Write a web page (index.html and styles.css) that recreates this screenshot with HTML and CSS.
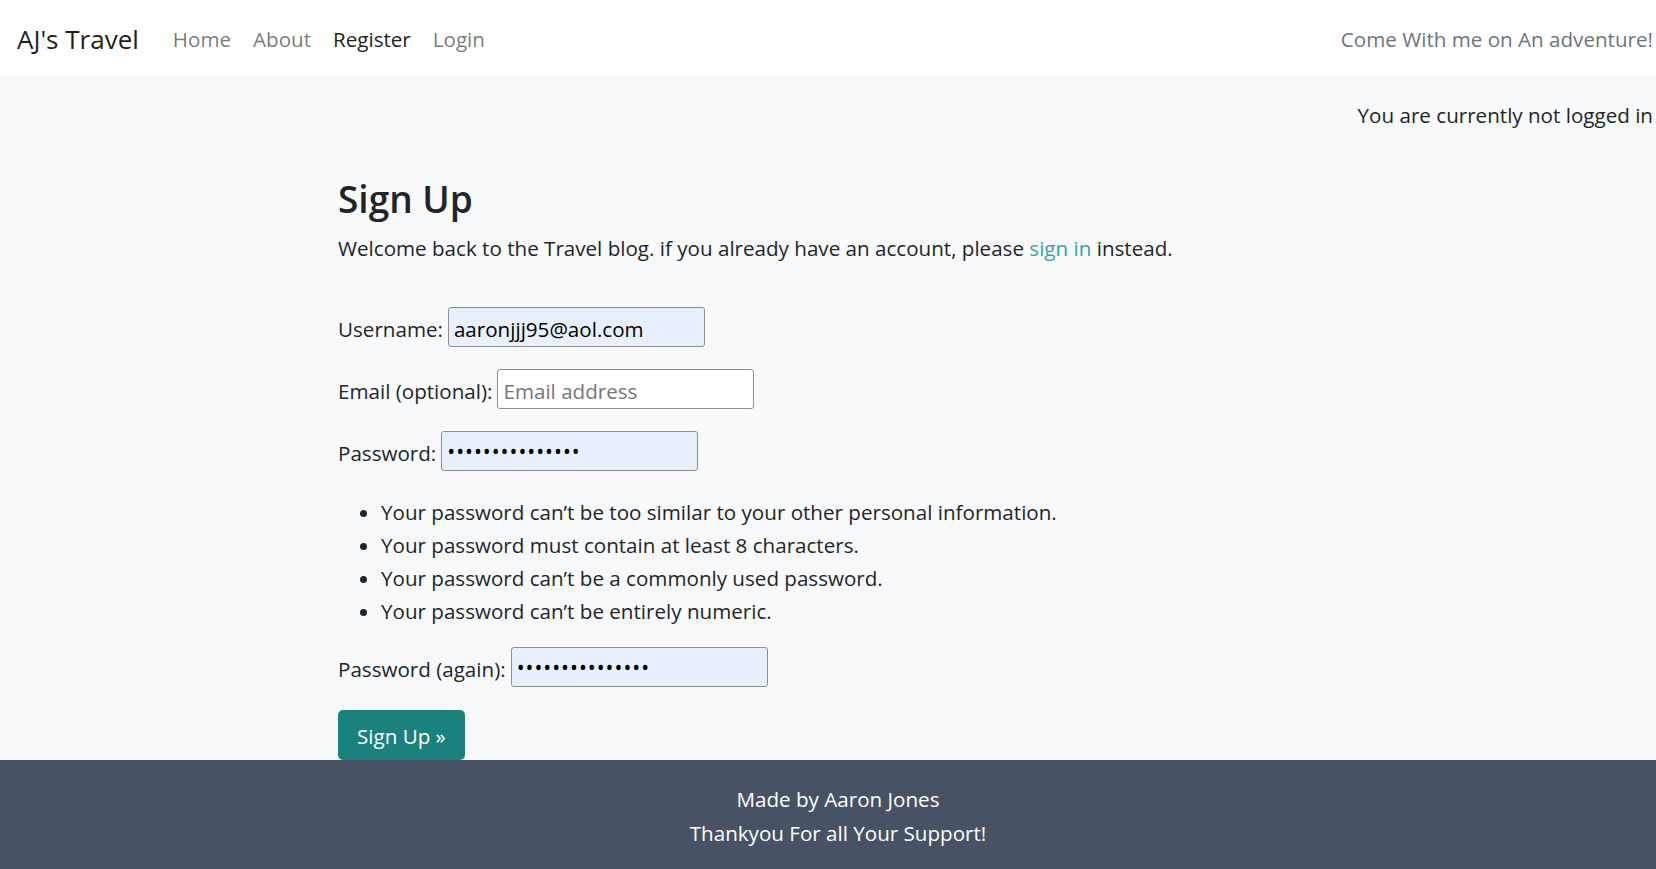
FILE: index.html
```html
<!DOCTYPE html>
<html lang="en">
<head>
<meta charset="utf-8">
<title>AJ's Travel - Sign Up</title>
<link rel="stylesheet" href="styles.css">
</head>
<body>
<nav class="navbar">
  <a class="brand" href="#">AJ's Travel</a>
  <ul class="nav-links">
    <li><a class="nav-link" href="#">Home</a></li>
    <li><a class="nav-link" href="#">About</a></li>
    <li><a class="nav-link active" href="#">Register</a></li>
    <li><a class="nav-link" href="#">Login</a></li>
  </ul>
  <span class="tagline">Come With me on An adventure!</span>
</nav>
<main class="main">
  <div class="status">You are currently not logged in</div>
  <section class="content">
    <h1 class="title">Sign Up</h1>
    <p class="intro">Welcome back to the Travel blog. if you already have an account, please <a class="link" href="#">sign in</a> instead.</p>
    <form class="signup">
      <div class="row">
        <label class="label" for="id_username">Username:</label>
        <input class="field filled" id="id_username" type="text" value="aaronjjj95@aol.com">
      </div>
      <div class="row">
        <label class="label" for="id_email">Email (optional):</label>
        <input class="field" id="id_email" type="email" placeholder="Email address">
      </div>
      <div class="row">
        <label class="label" for="id_password1">Password:</label>
        <input class="field filled" id="id_password1" type="password" value="aaaaaaaaaaaaaaa">
      </div>
      <ul class="help">
        <li>Your password can’t be too similar to your other personal information.</li>
        <li>Your password must contain at least 8 characters.</li>
        <li>Your password can’t be a commonly used password.</li>
        <li>Your password can’t be entirely numeric.</li>
      </ul>
      <div class="row row-last">
        <label class="label" for="id_password2">Password (again):</label>
        <input class="field filled" id="id_password2" type="password" value="aaaaaaaaaaaaaaa">
      </div>
      <button class="btn" type="button">Sign Up »</button>
    </form>
  </section>
</main>
<footer class="footer">
  <p class="footer-line">Made by Aaron Jones</p>
  <p class="footer-line">Thankyou For all Your Support!</p>
</footer>
</body>
</html>
```
FILE: styles.css
```css
* { box-sizing: border-box; }
html, body { margin: 0; padding: 0; }
body {
  font-family: "Open Sans", "Noto Sans", "DejaVu Sans", sans-serif;
  font-size: 20.6px;
  color: #212529;
  background: #f8f9fa;
  height: 869px;
  overflow: hidden;
  display: flex;
  flex-direction: column;
}
.navbar {
  height: 76px;
  background: #ffffff;
  display: flex;
  align-items: center;
  padding: 2px 3px 0 17px;
  flex-shrink: 0;
}
.brand {
  font-size: 26px;
  color: rgba(0,0,0,.9);
  text-decoration: none;
  margin-right: 23px;
  line-height: 1;
}
.nav-links {
  list-style: none;
  margin: 0;
  padding: 0;
  display: flex;
}
.nav-link {
  display: block;
  padding: 0 11px;
  color: rgba(0,0,0,.55);
  text-decoration: none;
}
.nav-link.active { color: rgba(0,0,0,.9); }
.tagline {
  margin-left: auto;
  color: #6c757d;
}
.main {
  flex: 1;
  display: flex;
  flex-direction: column;
}
.status {
  text-align: right;
  padding-right: 3px;
  margin-top: 23px;
  line-height: 32px;
}
.content {
  padding-left: 338px;
}
.title {
  font-size: 37px;
  font-weight: 600;
  line-height: 48px;
  margin: 44px 0 0;
}
.intro {
  margin: 9px 0 0;
  line-height: 32px;
}
.link { color: #35a4a6; text-decoration: none; }
.signup {
  margin-top: 43px;
  display: flex;
  flex-direction: column;
  align-items: flex-start;
}
.row {
  display: flex;
  align-items: center;
  gap: 5px;
  height: 40px;
  margin-bottom: 22px;
}
.row-last { margin-bottom: 0; }
.label { padding-top: 3px; }
.field {
  width: 257px;
  height: 40px;
  border: 1px solid #8f8f8f;
  border-radius: 3px;
  padding: 3px 5px 0;
  font-family: inherit;
  font-size: 20.6px;
  color: #000;
  background: #ffffff;
}
.field.filled { background: #e8f0fe; }
.field::placeholder { color: #767676; }
input[type="password"] { letter-spacing: 1px; font-size: 21px; padding-top: 0; }
.help {
  margin: 3px 0 19px;
  padding-left: 43px;
  line-height: 33px;
}
.btn {
  margin-top: 23px;
  height: 50px;
  padding: 1px 19px 0;
  background: #1b817d;
  color: #ffffff;
  border: none;
  border-radius: 5px;
  font-family: inherit;
  font-size: 20.6px;
}
.footer {
  height: 109px;
  flex-shrink: 0;
  background: #475364;
  color: #ffffff;
  text-align: center;
  padding: 22px 0 0 20px;
}
.footer-line {
  margin: 0;
  line-height: 34px;
}
```
